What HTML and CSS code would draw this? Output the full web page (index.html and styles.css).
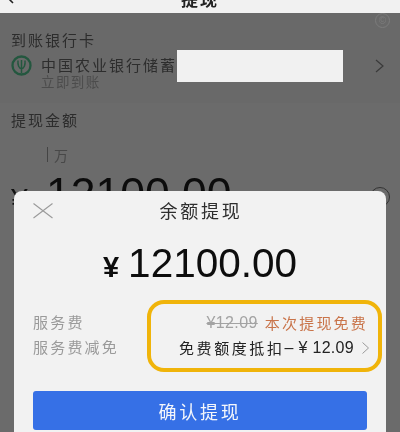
FILE: index.html
```html
<!DOCTYPE html>
<html lang="zh">
<head>
<meta charset="utf-8">
<title>提现</title>
<link rel="stylesheet" href="styles.css">
</head>
<body>
<div class="page">
  <header class="topbar">
    <svg class="back" width="10" height="13" viewBox="0 0 10 13"><path d="M8 -6 L2 0 L5 3" fill="none" stroke="#222" stroke-width="1.6"/></svg>
    <span class="top-title">提现</span>
  </header>
  <section class="bank">
    <div class="copy-mark">©</div>
    <div class="section-label">到账银行卡</div>
    <div class="bank-row">
      <svg class="bank-logo" width="21" height="21" viewBox="0 0 21 21">
        <circle cx="10.5" cy="10.5" r="9" fill="none" stroke="#24573f" stroke-width="2.3"/>
        <path d="M7 5.5 C6.5 10 8 13.5 10.5 13.5 C13 13.5 14.5 10 14 5.5 M10.5 5 V18" fill="none" stroke="#24573f" stroke-width="1.5"/>
      </svg>
      <div class="bank-text">
        <div class="bank-name">中国农业银行储蓄</div>
        <div class="bank-sub">立即到账</div>
      </div>
      <svg class="chev" width="9" height="14" viewBox="0 0 9 14"><path d="M1 1 L8 7 L1 13" fill="none" stroke="#3a3a3a" stroke-width="1.2"/></svg>
    </div>
  </section>
  <section class="withdraw">
    <div class="section-label">提现金额</div>
    <div class="unit"><span class="unit-text">万</span></div>
    <div class="amount-row"><span class="yen">¥</span><span class="amount">12100.00</span></div>
  </section>
  <div class="redact"></div>
  <div class="clear-ring"></div>
  <div class="sheet">
    <div class="sheet-head">
      <svg class="close" width="20" height="16" viewBox="0 0 20 16"><path d="M0.5 0.5 L19.5 15 M19.5 0.5 L0.5 15" fill="none" stroke="#9a9a9a" stroke-width="1.1"/></svg>
      <span class="sheet-title">余额提现</span>
    </div>
    <div class="sheet-amount"><span class="sheet-yen">¥</span>12100.00</div>
    <div class="fees">
      <div class="fee-labels">
        <div>服务费</div>
        <div>服务费减免</div>
      </div>
      <div class="fee-box">
        <div class="fee-line"><s class="old">¥12.09</s><span class="free">本次提现免费</span></div>
        <div class="fee-line dark"><span class="quota">免费额度抵扣</span><span class="minus">– ¥ 12.09</span>
          <svg width="7" height="12" viewBox="0 0 7 12"><path d="M0.5 0.5 L6.5 6 L0.5 11.5" fill="none" stroke="#9a9a9a" stroke-width="1"/></svg>
        </div>
      </div>
    </div>
    <div class="confirm">确认提现</div>
  </div>
</div>
</body>
</html>
```
FILE: styles.css
```css
* { box-sizing: border-box; }
html, body { margin: 0; padding: 0; }
body { font-family: "Liberation Sans", "Noto Sans CJK SC", sans-serif; }
.page { position: relative; width: 400px; height: 432px; overflow: hidden; background: #6b6b6b; filter: blur(0.45px); }
.topbar { position: relative; height: 13px; background: #f1f1f1; overflow: hidden; display: flex; justify-content: center; align-items: flex-end; }
.back { position: absolute; left: 8px; top: 0; }
.top-title { font-size: 17px; line-height: 20px; margin-bottom: 2px; color: #222; font-weight: 700; letter-spacing: 2px; }
.bank { position: relative; height: 90px; padding: 18px 11px 0; background: #696969; }
.copy-mark { position: absolute; left: 375px; top: 0; width: 15px; height: 15px; border: 1px solid #7c7c7c; border-radius: 50%; font-size: 10px; line-height: 13px; text-align: center; color: #7c7c7c; }
.section-label { font-size: 15px; line-height: 20px; color: #2c2c2c; letter-spacing: 2px; }
.bank-row { display: flex; align-items: flex-start; margin-top: 4px; }
.bank-logo { margin-right: 9px; margin-top: 0; }
.bank-text { flex: 1; }
.bank-name { font-size: 15px; line-height: 20px; color: #2d2d2d; letter-spacing: 2px; margin-top: 1px; white-space: nowrap; }
.bank-sub { font-size: 13.5px; line-height: 16px; color: #4c4c4c; margin-top: -1px; letter-spacing: 1.4px; }
.chev { margin: 4px 5px 0 0; }
.withdraw { padding: 8px 11px 0; background: #6b6b6b; }
.unit { margin: 16px 0 0 36px; height: 15px; border-left: 1px solid #444; padding-left: 6px; display: flex; align-items: center; }
.unit-text { font-size: 14px; color: #484848; }
.amount-row { display: flex; align-items: baseline; margin-top: 9px; }
.yen { font-size: 30px; line-height: 46px; color: #111; width: 35px; }
.amount { font-size: 44.5px; line-height: 46px; color: #0c0c0c; }
.redact { position: absolute; left: 177px; top: 50px; width: 166px; height: 32px; background: #f1f1f1; }
.clear-ring { position: absolute; left: 370px; top: 187px; width: 20px; height: 20px; border: 1.5px solid #333; border-radius: 50%; }
.sheet { position: absolute; left: 14px; top: 191px; width: 372px; height: 241px; background: #f2f2f2; border-radius: 8px 8px 0 0; padding: 0 19px; }
.sheet-head { position: relative; height: 40px; display: flex; justify-content: center; align-items: center; }
.close { position: absolute; left: 0; top: 12px; }
.sheet-title { font-size: 18px; color: #2e2e2e; letter-spacing: 2.7px; margin: 0 0 2px 2px; }
.sheet-amount { display: flex; justify-content: center; align-items: baseline; font-size: 40.5px; line-height: 46px; margin-top: 9px; color: #0d0d0d; }
.sheet-yen { font-size: 29px; font-weight: 700; margin-right: 9px; }
.fees { display: flex; justify-content: space-between; margin-top: 10px; margin-right: -15px; }
.fee-labels { padding-top: 10px; font-size: 15px; line-height: 25px; color: #9a9a9a; letter-spacing: 2.2px; }
.fee-box { width: 235px; height: 72px; border: 4px solid #f0b40a; border-radius: 17px; padding: 6px 12px 0 0; display: flex; flex-direction: column; align-items: flex-end; }
.fee-line { display: flex; align-items: center; height: 25px; font-size: 15px; gap: 7px; }
.old { color: #a3a3a3; font-size: 16px; letter-spacing: 0.4px; }
.free { color: #c9744a; letter-spacing: 2.2px; margin-right: -2px; }
.dark { color: #222; gap: 0; margin-right: -3px; }
.quota { letter-spacing: 2.6px; }
.minus { font-size: 16px; margin-right: 8px; letter-spacing: 0.3px; white-space: pre; }
.confirm { margin-top: 19px; height: 39px; background: #3670e6; color: #f4f6fb; border-radius: 3px; display: flex; align-items: center; justify-content: center; font-size: 18px; letter-spacing: 2.7px; }
```
